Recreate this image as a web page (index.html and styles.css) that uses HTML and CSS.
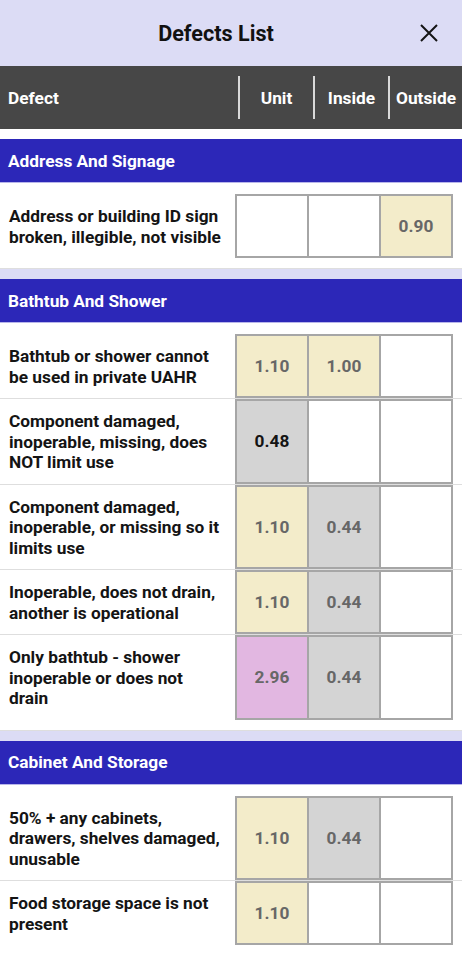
FILE: index.html
```html
<!DOCTYPE html>
<html lang="en">
<head>
  <meta charset="UTF-8">
  <meta name="viewport" content="width=device-width, initial-scale=1.0">
  <title>Defects List</title>
  <link rel="stylesheet" href="styles.css">
</head>
<body>

  <header class="topbar">
    <h1 class="topbar-title">Defects List</h1>
    <button class="close-btn" type="button" aria-label="Close">
      <svg width="18" height="18" viewBox="0 0 18 18">
        <path d="M1 1 L17 17 M17 1 L1 17" stroke="#141414" stroke-width="2" fill="none"/>
      </svg>
    </button>
  </header>

  <div class="table-head">
    <div class="th th-defect">Defect</div>
    <div class="th">Unit</div>
    <div class="th">Inside</div>
    <div class="th">Outside</div>
  </div>

  <div class="groups">

    <section class="group">
      <h2 class="group-title">Address And Signage</h2>
      <div class="group-body">
        <div class="row">
          <div class="defect">Address or building ID sign broken, illegible, not visible</div>
          <div class="cells">
            <div class="cell"></div>
            <div class="cell"></div>
            <div class="cell cell-yellow">0.90</div>
          </div>
        </div>
      </div>
    </section>

    <section class="group">
      <h2 class="group-title">Bathtub And Shower</h2>
      <div class="group-body">
        <div class="row">
          <div class="defect">Bathtub or shower cannot be used in private UAHR</div>
          <div class="cells">
            <div class="cell cell-yellow">1.10</div>
            <div class="cell cell-yellow">1.00</div>
            <div class="cell"></div>
          </div>
        </div>
        <div class="row">
          <div class="defect">Component damaged, inoperable, missing, does NOT limit use</div>
          <div class="cells">
            <div class="cell cell-grey cell-dark">0.48</div>
            <div class="cell"></div>
            <div class="cell"></div>
          </div>
        </div>
        <div class="row">
          <div class="defect">Component damaged, inoperable, or missing so it limits use</div>
          <div class="cells">
            <div class="cell cell-yellow">1.10</div>
            <div class="cell cell-grey">0.44</div>
            <div class="cell"></div>
          </div>
        </div>
        <div class="row">
          <div class="defect">Inoperable, does not drain, another is operational</div>
          <div class="cells">
            <div class="cell cell-yellow">1.10</div>
            <div class="cell cell-grey">0.44</div>
            <div class="cell"></div>
          </div>
        </div>
        <div class="row">
          <div class="defect">Only bathtub - shower inoperable or does not drain</div>
          <div class="cells">
            <div class="cell cell-pink">2.96</div>
            <div class="cell cell-grey">0.44</div>
            <div class="cell"></div>
          </div>
        </div>
      </div>
    </section>

    <section class="group">
      <h2 class="group-title">Cabinet And Storage</h2>
      <div class="group-body">
        <div class="row">
          <div class="defect">50% + any cabinets, drawers, shelves damaged, unusable</div>
          <div class="cells">
            <div class="cell cell-yellow">1.10</div>
            <div class="cell cell-grey">0.44</div>
            <div class="cell"></div>
          </div>
        </div>
        <div class="row">
          <div class="defect">Food storage space is not present</div>
          <div class="cells">
            <div class="cell cell-yellow">1.10</div>
            <div class="cell"></div>
            <div class="cell"></div>
          </div>
        </div>
      </div>
    </section>

  </div>

</body>
</html>
```

FILE: styles.css
```css
:root {
  --lavender: #dcdcf5;
  --head-dark: #474747;
  --blue: #2c27b8;
  --cell-border: #a6a6a6;
  --row-line: #dedede;
  --yellow: #f3ecca;
  --grey: #d4d4d4;
  --pink: #e2b7e1;
  --value-color: #676767;
}
* {
  box-sizing: border-box;
}
body {
  margin: 0;
  font-family: Roboto, "Noto Sans", Arial, sans-serif;
  color: #141414;
  background-color: #fff;
  height: 954px;
  overflow: hidden;
}

/* Barra superior */
.topbar {
  display: flex;
  align-items: center;
  height: 66px;
  padding: 0 16px 0 20px;
  background-color: var(--lavender);
}
.topbar-title {
  flex: 1;
  margin: 0;
  text-align: center;
  font-size: 21.6px;
  font-weight: 700;
  color: #111;
}
.close-btn {
  display: flex;
  align-items: center;
  justify-content: center;
  width: 34px;
  height: 34px;
  padding: 0;
  border: none;
  background: none;
}

/* Cabeçalho da tabela */
.table-head {
  display: flex;
  align-items: center;
  height: 63px;
  background-color: var(--head-dark);
  color: #fff;
  font-size: 17.3px;
  font-weight: 700;
}
.th {
  display: flex;
  align-items: center;
  justify-content: center;
  width: 75px;
  height: 43px;
  border-left: 2px solid #d9d9d9;
}
.th:last-child {
  width: 74px;
}
.th-defect {
  flex: 1;
  justify-content: flex-start;
  padding-left: 8px;
  border-left: none;
}

.groups {
  padding-top: 10px;
}
.group + .group {
  border-top: 10px solid var(--lavender);
}
.group-title {
  display: flex;
  align-items: center;
  height: 44px;
  margin: 0;
  padding-left: 8px;
  background-color: var(--blue);
  border-bottom: 1px solid #b8b6ea;
  color: #fff;
  font-size: 17.3px;
  font-weight: 700;
}
.group-body {
  padding: 11px 0 10px;
  border-bottom: 1px solid var(--row-line);
}

/* Linhas de defeitos */
.row {
  display: flex;
  border-bottom: 1px solid var(--row-line);
}
.group-body .row:last-child {
  border-bottom: none;
}
.defect {
  width: 235px;
  padding: 12px 11px 11px 9px;
  font-size: 17.3px;
  font-weight: 700;
  line-height: 20.5px;
}
.cells {
  display: flex;
  border: 2px solid var(--cell-border);
  border-right: none;
}
.cell {
  display: flex;
  align-items: center;
  justify-content: center;
  width: 72px;
  border-right: 2px solid var(--cell-border);
  background-color: #fff;
  color: var(--value-color);
  font-size: 17.3px;
  font-weight: 700;
}
.cell-yellow {
  background-color: var(--yellow);
}
.cell-grey {
  background-color: var(--grey);
}
.cell-pink {
  background-color: var(--pink);
}
.cell-dark {
  color: #141414;
}
```
